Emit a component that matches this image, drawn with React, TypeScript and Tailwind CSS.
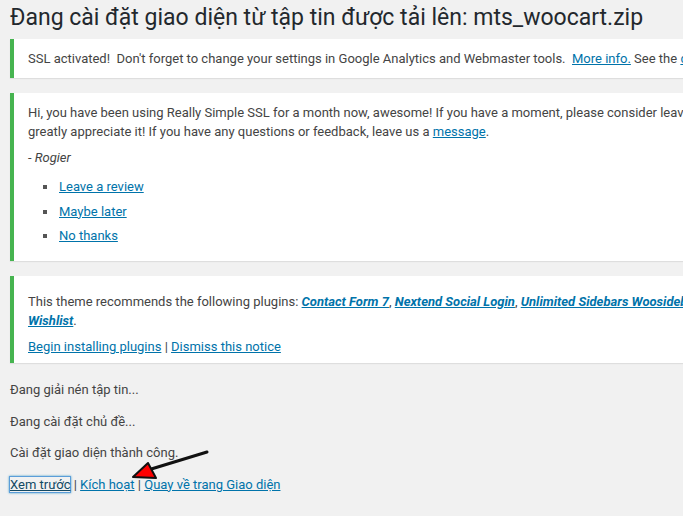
import React from 'react';

const font = { fontFamily: 'Roboto, "Noto Sans", sans-serif' };

const Notice: React.FC<{ className?: string; children: React.ReactNode }> = ({ className = '', children }) => (
  <div className={`w-[1100px] bg-white border-l-4 border-[#46b450] shadow-[0_1px_1px_rgba(0,0,0,0.08)] px-[12px] ${className}`}>
    {children}
  </div>
);

const Arrow = () => (
  <svg className="absolute left-0 top-0 pointer-events-none" width="683" height="516" viewBox="0 0 683 516">
    <line x1="207" y1="452" x2="148" y2="470" stroke="#111" strokeWidth="3" strokeLinecap="round" />
    <polygon points="133,477 148,463 156,478" fill="#f00" stroke="#111" strokeWidth="2" strokeLinejoin="round" />
  </svg>
);

export default function App() {
  return (
    <div className="relative w-[683px] h-[516px] overflow-hidden bg-[#f1f1f1] text-[13px] text-[#444]" style={font}>
      <div className="w-[1200px] pl-[10px]">
        <h1 className="text-[23px] leading-[30px] text-[#23282d] pt-[3px] pb-[1px] font-normal">
          Đang cài đặt giao diện từ tập tin được tải lên: mts_woocart.zip
        </h1>

        <Notice className="mt-[5px] py-[1px]">
          <p className="my-[6.5px] p-[2px] leading-[19.5px] whitespace-nowrap">
            SSL activated!&nbsp; Don't forget to change your settings in Google Analytics and Webmaster tools.&nbsp;{' '}
            <a href="#" className="text-[#0073aa] underline">More info.</a> See the{' '}
            <a href="#" className="text-[#0073aa] underline">detailed configuration</a>.
          </p>
        </Notice>

        <Notice className="mt-[15px] pt-[1px] pb-[1px]">
          <p className="mt-[7px] p-[2px] leading-[19.5px] whitespace-nowrap">
            Hi, you have been using Really Simple SSL for a month now, awesome! If you have a moment, please consider leaving a review on WordPress.org to help spread the word. We
            <br />
            greatly appreciate it! If you have any questions or feedback, leave us a{' '}
            <a href="#" className="text-[#0073aa] underline">message</a>.
          </p>
          <div className="mt-[4px] px-[2px] leading-[19.5px] italic">- Rogier</div>
          <ul className="mt-[10px] mb-[14px] ml-[17px] flex flex-col gap-[5px]">
            {['Leave a review', 'Maybe later', 'No thanks'].map((t) => (
              <li key={t} className="flex items-center leading-[19.5px]">
                <span className="w-[4px] h-[4px] bg-[#555] mr-[12px] mt-[1px]" />
                <a href="#" className="text-[#0073aa] underline">{t}</a>
              </li>
            ))}
          </ul>
        </Notice>

        <Notice className="mt-[15px] pt-[16px] pb-[7px]">
          <p className="px-[2px] leading-[19.5px] whitespace-nowrap">
            This theme recommends the following plugins:{' '}
            <a href="#" className="text-[#0073aa] underline font-bold italic">Contact Form 7</a>,{' '}
            <a href="#" className="text-[#0073aa] underline font-bold italic">Nextend Social Login</a>,{' '}
            <a href="#" className="text-[#0073aa] underline font-bold italic">Unlimited Sidebars Woosidebars</a> and{' '}
            <a href="#" className="text-[#0073aa] underline font-bold italic">YITH WooCommerce</a>
            <br />
            <a href="#" className="text-[#0073aa] underline font-bold italic">Wishlist</a>.
          </p>
          <p className="mt-[6px] px-[2px] leading-[19.5px]">
            <a href="#" className="text-[#0073aa] underline">Begin installing plugins</a> |{' '}
            <a href="#" className="text-[#0073aa] underline">Dismiss this notice</a>
          </p>
        </Notice>

        <div className="mt-[17px] flex flex-col gap-[12px] leading-[19.5px]">
          <p>Đang giải nén tập tin...</p>
          <p>Đang cài đặt chủ đề...</p>
          <p>Cài đặt giao diện thành công.</p>
          <p>
            <a href="#" className="text-[#124964] underline shadow-[0_0_0_1px_#5b9dd9,0_0_2px_1px_rgba(30,140,190,0.8)]">Xem trước</a> |{' '}
            <a href="#" className="text-[#0073aa] underline">Kích hoạt</a> |{' '}
            <a href="#" className="text-[#0073aa] underline">Quay về trang Giao diện</a>
          </p>
        </div>
      </div>
      <Arrow />
    </div>
  );
}
